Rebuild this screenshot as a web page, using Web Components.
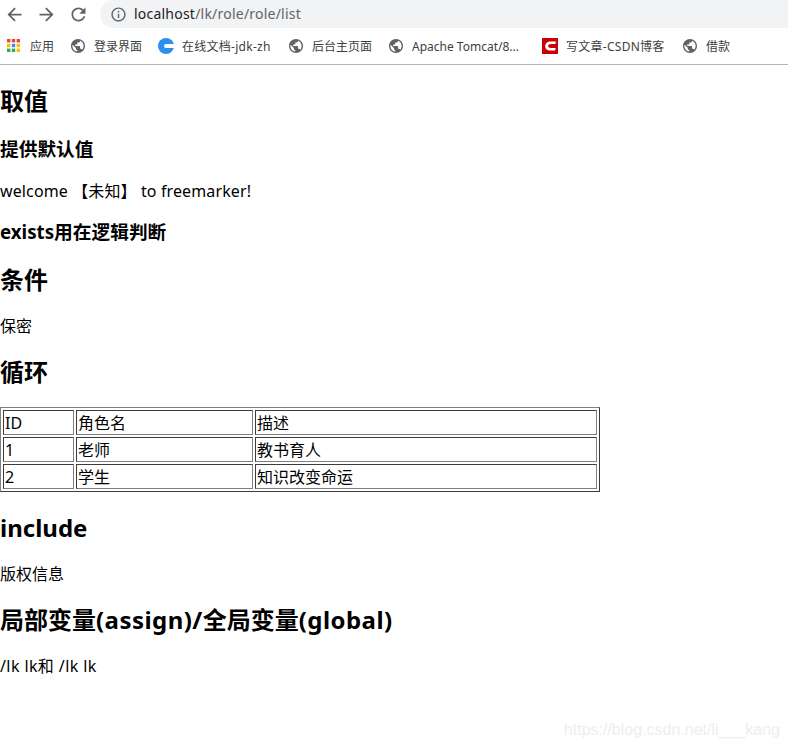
<!DOCTYPE html>
<html><head><meta charset="utf-8"><style>
html,body{margin:0;padding:0;background:#fff}
body{font-family:"Noto Sans","Noto Sans CJK SC",sans-serif;color:#000;width:788px;height:748px;overflow:hidden;position:relative}
.w{letter-spacing:.45px}
</style></head><body>
<browser-chrome url-host="localhost" url-path="/lk/role/role/list">
  <book-mark icon="apps" w="24">应用</book-mark>
  <book-mark icon="globe" w="48">登录界面</book-mark>
  <book-mark icon="c" w="90" style="letter-spacing:.27px">在线文档-jdk-zh</book-mark>
  <book-mark icon="globe" w="60">后台主页面</book-mark>
  <book-mark icon="globe" w="114">Apache Tomcat/8...</book-mark>
  <book-mark icon="csdn" w="100" style="letter-spacing:.27px">写文章-CSDN博客</book-mark>
  <book-mark icon="globe" w="24">借款</book-mark>
</browser-chrome>
<fm-page></fm-page>
<water-mark>https://blog.csdn.net/li___kang</water-mark>
<script>
function def(name,html){customElements.define(name,class extends HTMLElement{
  constructor(){super();this.attachShadow({mode:'open'}).innerHTML=typeof html==='function'?html(this):html;}
});}
const GLOBE='<svg viewBox="0.57 0.57 22.86 22.86" width="16" height="16"><path fill="#5f6368" d="M12 2C6.48 2 2 6.480 2 12s4.480 10 10 10 10-4.480 10-10S17.520 2 12 2zm-1 17.930c-3.950-.49-7-3.850-7-7.930 0-.62.08-1.210.21-1.790L9 15v1c0 1.100.9 2 2 2v1.930zm6.900-2.540c-.26-.81-1-1.390-1.900-1.390h-1v-3c0-.55-.45-1-1-1H8v-2h2c.55 0 1-.45 1-1V7h2c1.100 0 2-.9 2-2v-.41c2.930 1.190 5 4.060 5 7.410 0 2.080-.8 3.970-2.100 5.390z"/></svg>';
const ICONS={
 globe:GLOBE,
 apps:'<svg viewBox="0 0 16 16" width="16" height="16">'+
  [['#ea4335','#ea4335','#ea4335'],['#fbbc04','#4285f4','#fbbc04'],['#34a853','#34a853','#fbbc04']].map((r,y)=>r.map((c,x)=>`<rect x="${1+x*4.8}" y="${1+y*4.8}" width="3.400" height="3.400" fill="${c}"/>`).join('')).join('')+'</svg>',
 c:'<svg viewBox="0 0 16 16" width="16" height="16"><circle cx="8" cy="8" r="8" fill="#2b8ff0"/><path fill="#fff" d="M16 6H8a2 2 0 0 0 0 4h8z"/></svg>',
 csdn:'<svg viewBox="0 0 16 16" width="16" height="16"><rect width="16" height="16" fill="#c90008"/><path fill="#fff" d="M14 3.600H8.500C5.500 3.600 3.200 5.500 3.200 8.200s2.200 4.300 5.300 4.300H13l.8-2.500H8.800c-1.600 0-2.700-.7-2.700-1.900s1.200-2 2.800-2h4.400z"/></svg>'
};
def('nav-button',h=>`<style>:host{display:flex;width:32px;height:28px;align-items:center;justify-content:center}svg{display:block}</style>
<svg width="21" height="21" viewBox="0 0 24 24"><path fill="#5f6368" d="${h.getAttribute('d')}"/></svg>`);
def('book-mark',h=>`<style>:host{display:flex;align-items:center;gap:8px;padding:0 8px;height:36px;font-size:12px;color:#3c4043;white-space:nowrap;flex:none}
span{display:block;width:${h.getAttribute('w')}px;overflow:hidden}svg{display:block;flex:none}</style>${ICONS[h.getAttribute('icon')]}<span><slot></slot></span>`);
def('browser-chrome',h=>`<style>:host{display:block;height:65px;box-sizing:border-box;border-bottom:1px solid #b5b5b5;background:#fff}
.top{display:flex;height:28px}.nav{display:flex;width:100px;margin-left:-2px;flex:none}
.omni{flex:1;height:28px;margin-left:2px;background:#f1f3f4;border-radius:14px 0 0 14px;display:flex;align-items:center;padding-left:9.500px;gap:7.500px;font-size:14px;letter-spacing:.22px;color:#5f6368}
.omni svg{display:block;flex:none}.omni span{padding-bottom:2px}b{font-weight:400;color:#202124}
.marks{display:flex;height:36px;margin-left:-2px}</style>
<div class="top"><div class="nav">
<nav-button d="M20 11H7.830l5.590-5.590L12 4l-8 8 8 8 1.410-1.410L7.830 13H20v-2z"></nav-button><nav-button d="M12 4l-1.410 1.410L16.170 11H4v2h12.170l-5.580 5.590L12 20l8-8z"></nav-button><nav-button d="M17.650 6.350C16.200 4.900 14.210 4 12 4c-4.420 0-7.990 3.580-7.990 8s3.570 8 7.990 8c3.730 0 6.840-2.550 7.730-6h-2.080c-.82 2.330-3.040 4-5.650 4-3.310 0-6-2.690-6-6s2.690-6 6-6c1.660 0 3.140.69 4.220 1.780L13 11h7V4l-2.350 2.350z"></nav-button>
</div><div class="omni"><svg width="17" height="17" viewBox="0 0 24 24"><path fill="#5f6368" d="M11 7h2v2h-2zm0 4h2v6h-2zm1-9C6.480 2 2 6.480 2 12s4.480 10 10 10 10-4.480 10-10S17.520 2 12 2zm0 18c-4.410 0-8-3.590-8-8s3.590-8 8-8 8 3.590 8 8-3.590 8-8 8z"/></svg><span><b>${h.getAttribute('url-host')}</b>${h.getAttribute('url-path')}</span></div></div>
<div class="marks"><slot></slot></div>`);
def('fm-heading',`<style>:host{display:block}h2{font-size:24px;line-height:31px;font-weight:700;margin:19.92px 0}</style><h2><slot></slot></h2>`);
def('fm-sub',`<style>:host{display:block}h3{font-size:18.72px;line-height:25px;font-weight:700;margin:18.72px 0}</style><h3><slot></slot></h3>`);
def('fm-text',`<style>:host{display:block}p{font-size:16px;line-height:21px;height:21px;box-sizing:border-box;padding-top:1px;margin:18.72px 0}</style><p><slot></slot></p>`);
def('fm-table',`<style>:host{display:block}
table{width:600px;box-sizing:border-box;border-collapse:separate;border-spacing:2px;border:1px solid;border-color:#808080 #3c3c3c #3c3c3c #808080;table-layout:fixed;font-size:16px}
td{padding:2px 1px 0;height:21px;line-height:21px;box-sizing:content-box;border:1px solid;border-color:#3c3c3c #808080 #808080 #3c3c3c;white-space:nowrap;overflow:hidden}
</style><table><colgroup><col style="width:71px"><col style="width:177px"><col style="width:342px"></colgroup>
<tr><td>ID</td><td>角色名</td><td>描述</td></tr><tr><td>1</td><td>老师</td><td>教书育人</td></tr><tr><td>2</td><td>学生</td><td>知识改变命运</td></tr></table>`);
def('fm-page',`<style>:host{display:flow-root}.w{letter-spacing:.45px}</style>
<fm-heading>取值</fm-heading><fm-sub>提供默认值</fm-sub><fm-text style="letter-spacing:.12px">welcome 【未知】 to freemarker!</fm-text><fm-sub>exists用在逻辑判断</fm-sub>
<fm-heading>条件</fm-heading><fm-text>保密</fm-text><fm-heading>循环</fm-heading><fm-table></fm-table>
<fm-heading>include</fm-heading><fm-text>版权信息</fm-text><fm-heading>局部变量<span class="w">(assign)/</span>全局变量<span class="w">(global)</span></fm-heading><fm-text style="letter-spacing:.4px">/lk lk和 /lk lk</fm-text>`);
def('water-mark',`<style>:host{position:absolute;right:8px;top:721px;font-family:"Liberation Sans",sans-serif;font-size:16px;line-height:18px;color:#eeeeee}</style><slot></slot>`);
</script>
</body></html>
